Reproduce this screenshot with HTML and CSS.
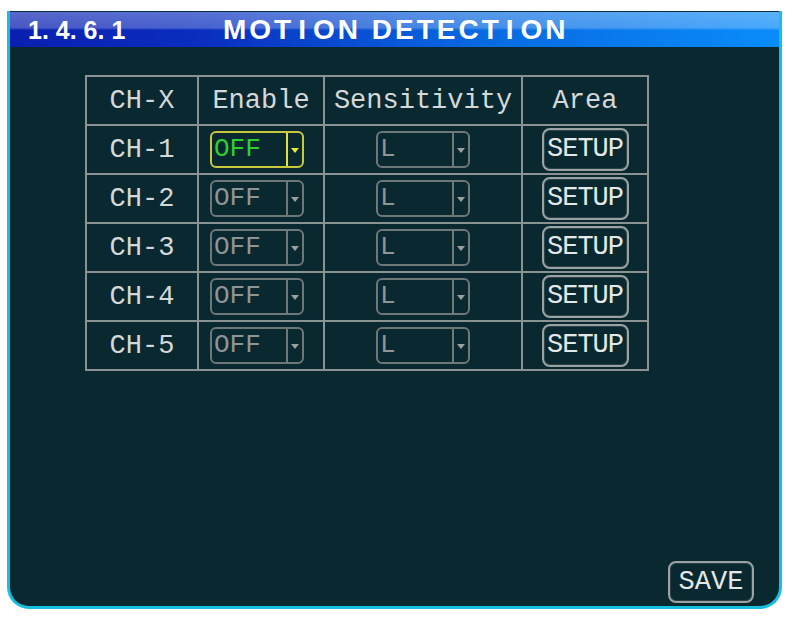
FILE: index.html
```html
<!DOCTYPE html>
<html lang="en">
<head>
  <meta charset="UTF-8" />
  <title>Motion Detection</title>
  <link rel="stylesheet" href="styles.css">
</head>
<body>
  <div class="screen">
    <div class="title-bar">
      <span class="menu-no">1. 4. 6. 1</span>
      <span class="menu-name">MOT<span class="wide">I</span>ON DETECT<span class="wide">I</span>ON</span>
    </div>

    <table class="grid">
      <tr>
        <th class="col-ch">CH-X</th>
        <th class="col-en">Enable</th>
        <th class="col-sens">Sensitivity</th>
        <th class="col-area">Area</th>
      </tr>
      <tr>
        <td>CH-1</td>
        <td class="en-cell"><div class="combo active"><span class="value">OFF</span><span class="arrow"></span></div></td>
        <td><div class="combo"><span class="value">L</span><span class="arrow"></span></div></td>
        <td><div class="btn">SETUP</div></td>
      </tr>
      <tr>
        <td>CH-2</td>
        <td class="en-cell"><div class="combo"><span class="value">OFF</span><span class="arrow"></span></div></td>
        <td><div class="combo"><span class="value">L</span><span class="arrow"></span></div></td>
        <td><div class="btn">SETUP</div></td>
      </tr>
      <tr>
        <td>CH-3</td>
        <td class="en-cell"><div class="combo"><span class="value">OFF</span><span class="arrow"></span></div></td>
        <td><div class="combo"><span class="value">L</span><span class="arrow"></span></div></td>
        <td><div class="btn">SETUP</div></td>
      </tr>
      <tr>
        <td>CH-4</td>
        <td class="en-cell"><div class="combo"><span class="value">OFF</span><span class="arrow"></span></div></td>
        <td><div class="combo"><span class="value">L</span><span class="arrow"></span></div></td>
        <td><div class="btn">SETUP</div></td>
      </tr>
      <tr>
        <td>CH-5</td>
        <td class="en-cell"><div class="combo"><span class="value">OFF</span><span class="arrow"></span></div></td>
        <td><div class="combo"><span class="value">L</span><span class="arrow"></span></div></td>
        <td><div class="btn">SETUP</div></td>
      </tr>
    </table>

    <div class="btn save-btn">SAVE</div>
  </div>
</body>
</html>
```

FILE: styles.css
```css
body {
  margin: 0;
  padding: 0;
  background: #fff;
}

.screen {
  box-sizing: border-box;
  width: 775px;
  height: 598px;
  margin: 11px 0 0 7px;
  border: 3px solid #14bfe0;
  border-top: none;
  border-radius: 0 0 22px 22px;
  background: #092830;
  display: flex;
  flex-direction: column;
  overflow: hidden;
}

.title-bar {
  height: 36px;
  display: flex;
  align-items: center;
  padding-left: 18px;
  border-top: 1px solid #0a3040;
  box-sizing: border-box;
  background:
    linear-gradient(to bottom, rgba(255, 255, 255, 0.32) 0, rgba(255, 255, 255, 0.25) 45%, rgba(255, 255, 255, 0) 52%),
    linear-gradient(to right, #0a1fb0 0, #0a2ec0 25%, #0868e0 60%, #0a8cfa 100%);
  color: #fff;
  font-family: "Liberation Sans", Arial, sans-serif;
  font-weight: 700;
}

.menu-no {
  font-size: 25px;
  width: 195px;
  padding-top: 2px;
}

.menu-name {
  font-size: 28px;
  letter-spacing: 3px;
}

.menu-name .wide {
  margin: 0 4px;
}

.grid {
  align-self: flex-start;
  border-collapse: collapse;
  margin: 28px 0 0 75px;
  font-family: "Liberation Mono", "Courier New", monospace;
  font-size: 27px;
  color: #d4d8d8;
}

.grid th,
.grid td {
  border: 2px solid #8a9292;
  height: 47px;
  padding: 0;
  text-align: center;
  font-weight: 400;
}

.grid .en-cell {
  padding-right: 8px;
}

.col-ch { width: 110px; }
.col-en { width: 124px; }
.col-sens { width: 196px; }
.col-area { width: 124px; }

.combo {
  box-sizing: border-box;
  display: inline-flex;
  width: 94px;
  height: 37px;
  border: 2px solid #6f7878;
  border-radius: 6px;
  color: #8f9595;
  font-size: 26px;
  vertical-align: middle;
}

.combo .value {
  flex: 1;
  text-align: left;
  padding-left: 2px;
  line-height: 33px;
}

.combo .arrow {
  width: 14px;
  border-left: 2px solid #6f7878;
  position: relative;
}

.combo .arrow::after {
  content: "";
  position: absolute;
  left: 3px;
  top: 15px;
  border-left: 4px solid transparent;
  border-right: 4px solid transparent;
  border-top: 5px solid #9aa0a0;
}

.combo.active {
  border-color: #c8c83c;
  color: #2ed02e;
}

.combo.active .arrow {
  border-left-color: #e0e040;
}

.combo.active .arrow::after {
  border-top-color: #e8e840;
}

.btn {
  box-sizing: border-box;
  display: inline-block;
  width: 87px;
  height: 43px;
  border: 2px solid #9aa2a2;
  border-radius: 8px;
  box-shadow: inset 0 0 0 1px #2a4448;
  color: #e4e8e8;
  font-family: "Liberation Mono", "Courier New", monospace;
  font-size: 27px;
  line-height: 39px;
  text-align: center;
  letter-spacing: -1px;
  vertical-align: middle;
}

.save-btn {
  width: 86px;
  height: 42px;
  line-height: 38px;
  letter-spacing: 0;
  margin: auto 25px 3px 0;
  align-self: flex-end;
}
```
